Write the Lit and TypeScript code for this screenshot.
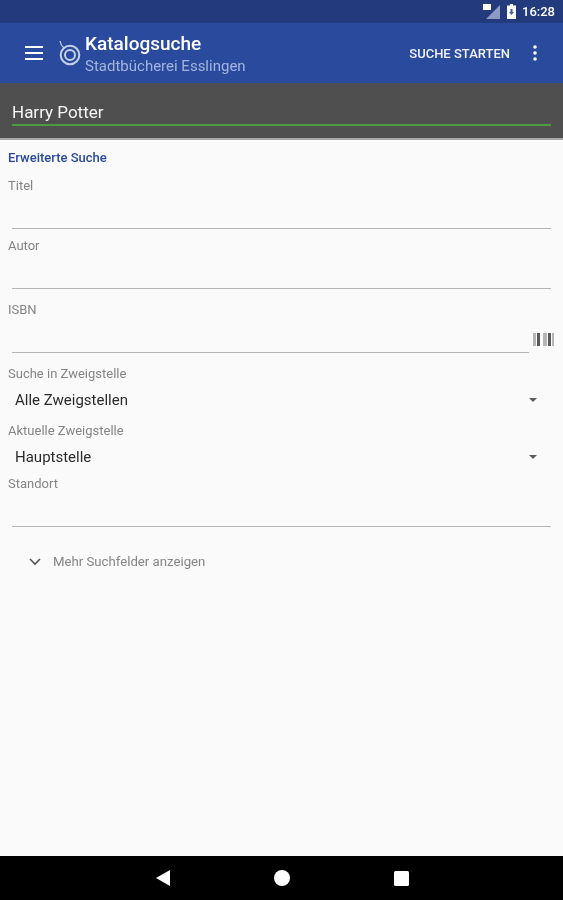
import { css, html, LitElement } from 'lit';
import { customElement } from 'lit/decorators.js';

@customElement('app-root')
export class AppRoot extends LitElement {
  static styles = css`
    :host {
      display: flex;
      flex-direction: column;
      height: 900px;
      background: #fafafa;
      font-family: Roboto, "Noto Sans", sans-serif;
      overflow: hidden;
      filter: blur(0.35px);
    }

    .status {
      height: 23px;
      background: #233a7c;
      display: flex;
      align-items: center;
      justify-content: flex-end;
      padding-right: 8px;
      color: #fff;
      font-size: 13px;
      font-weight: 500;
    }
    .status svg { display: block; }
    .status .signal { margin-right: 7px; }
    .status .battery { margin-right: 6px; }

    .toolbar {
      height: 60px;
      background: #2a4a9e;
      display: flex;
      align-items: center;
      color: #fff;
    }
    .menu { margin-left: 25px; }
    .logo { margin-left: 16px; margin-right: 4px; }
    .titles { flex: 1; padding-top: 4px; }
    .title {
      font-size: 19px;
      font-weight: 500;
      line-height: 22px;
    }
    .subtitle {
      font-size: 15px;
      line-height: 22px;
      color: #a3b5de;
    }
    .action {
      font-size: 13px;
      font-weight: 500;
      color: #f2f4fa;
      margin-right: 23px;
    }
    .more { margin-right: 26px; }

    .search {
      height: 57px;
      box-sizing: border-box;
      background: #4f4f4f;
      border-bottom: 2px solid #a8a8a8;
      padding: 18px 12px 0;
    }
    .search-text {
      color: #f5f5f5;
      font-size: 17px;
      line-height: 23px;
      height: 25px;
      box-sizing: border-box;
      border-bottom: 2px solid #4f9a3c;
    }

    .form {
      flex: 1;
      padding: 11px 0 0 8px;
    }
    .heading {
      font-size: 13px;
      font-weight: 500;
      line-height: 14px;
      color: #2a4a9e;
      margin-bottom: 13px;
    }
    .label {
      font-size: 13px;
      line-height: 14px;
      color: #858585;
      padding-top: 1px;
      margin-bottom: -1px;
    }
    .input {
      height: 36px;
      margin: 0 12px 0 4px;
      border-bottom: 1.5px solid #b4b4b4;
    }
    .gap-s { margin-bottom: 9px; }
    .gap-l { margin-bottom: 13px; }

    .with-scan {
      display: flex;
      align-items: flex-end;
      margin-right: 9px;
    }
    .with-scan .input {
      flex: 1;
      margin-right: 4px;
    }
    .with-scan svg { margin-bottom: 7px; }

    .select {
      display: flex;
      align-items: center;
      justify-content: space-between;
      padding: 0 26px 0 7px;
      font-size: 15px;
      color: #2b2b2b;
    }
    .select.first { height: 43px; padding-bottom: 3px; box-sizing: border-box; }
    .select.second { height: 39px; }
    .arrow {
      width: 0;
      height: 0;
      border-left: 4px solid transparent;
      border-right: 4px solid transparent;
      border-top: 4px solid #5a5a5a;
    }

    .expand {
      display: flex;
      align-items: center;
      margin-top: 27px;
      padding-left: 21px;
      font-size: 13.2px;
      line-height: 16px;
      color: #858585;
    }
    .expand svg { margin-right: 12px; }

    .nav {
      height: 44px;
      background: #000;
      display: flex;
      align-items: center;
      justify-content: center;
      gap: 104px;
      padding-left: 2px;
    }
    .nav svg { display: block; }
  `;

  render() {
    return html`
      <div class="status">
        <svg class="signal" width="17" height="15" viewBox="0 0 17 15">
          <path d="M17 1v14H3z" fill="#8c9bc4" />
          <rect x="0" y="0" width="8" height="6" fill="#fff" />
        </svg>
        <svg class="battery" width="9" height="15" viewBox="0 0 9 15">
          <path d="M3 0h3v1.5h3V15H0V1.5h3z" fill="#fff" />
          <path d="M3.5 5h2v3H7l-2.5 3L2 8h1.500z" fill="#4a5f9c" />
        </svg>
        <span>16:28</span>
      </div>

      <div class="toolbar">
        <svg class="menu" width="18" height="14" viewBox="0 0 18 14">
          <path d="M0 1h18M0 7h18M0 13h18" stroke="#fff" stroke-width="2" />
        </svg>
        <svg class="logo" width="22" height="26" viewBox="0 0 22 26" fill="none" stroke="#c5d0ea">
          <circle cx="11" cy="15" r="9.3" stroke-width="2" />
          <circle cx="11" cy="15" r="5" stroke-width="2" />
          <path d="M1 1c.5 3 1.500 5 4 7" stroke-width="1.300" />
        </svg>
        <div class="titles">
          <div class="title">Katalogsuche</div>
          <div class="subtitle">Stadtbücherei Esslingen</div>
        </div>
        <span class="action">SUCHE STARTEN</span>
        <svg class="more" width="4" height="16" viewBox="0 0 4 16" fill="#fff">
          <circle cx="2" cy="2" r="1.8" />
          <circle cx="2" cy="8" r="1.8" />
          <circle cx="2" cy="14" r="1.8" />
        </svg>
      </div>

      <div class="search">
        <div class="search-text">Harry Potter</div>
      </div>

      <div class="form">
        <div class="heading">Erweiterte Suche</div>

        <div class="label">Titel</div>
        <div class="input gap-s"></div>

        <div class="label">Autor</div>
        <div class="input gap-l"></div>

        <div class="label">ISBN</div>
        <div class="with-scan gap-l">
          <div class="input"></div>
          <svg width="21" height="13" viewBox="0 0 21 13">
            <path d="M0 0h3v13H0zM10 0h4v13h-4zM19 0h2v13h-2z" fill="#b5b5b5" />
            <path d="M4 0h3v13H4zM15 0h3v13h-3z" fill="#5a5a5a" />
          </svg>
        </div>

        <div class="label">Suche in Zweigstelle</div>
        <div class="select first">Alle Zweigstellen <span class="arrow"></span></div>

        <div class="label">Aktuelle Zweigstelle</div>
        <div class="select second">Hauptstelle <span class="arrow"></span></div>

        <div class="label">Standort</div>
        <div class="input"></div>

        <div class="expand">
          <svg width="12" height="8" viewBox="0 0 12 8" fill="none">
            <path d="M1 1l5 5 5-5" stroke="#555" stroke-width="1.6" />
          </svg>
          Mehr Suchfelder anzeigen
        </div>
      </div>

      <div class="nav">
        <svg width="14" height="16" viewBox="0 0 14 16" fill="#fff"><path d="M14 0v16L0 8z" /></svg>
        <svg width="16" height="16" viewBox="0 0 16 16" fill="#fff"><circle cx="8" cy="8" r="8" /></svg>
        <svg width="15" height="15" viewBox="0 0 15 15" fill="#fff"><rect width="15" height="15" rx="1.5" /></svg>
      </div>
    `;
  }
}
